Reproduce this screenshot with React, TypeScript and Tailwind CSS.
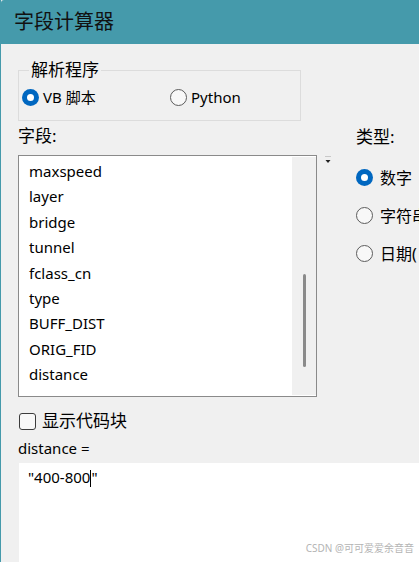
const fields = [
  "maxspeed",
  "layer",
  "bridge",
  "tunnel",
  "fclass_cn",
  "type",
  "BUFF_DIST",
  "ORIG_FID",
  "distance",
];

const Radio = ({ checked }: { checked?: boolean }) =>
  checked ? (
    <span className="size-[17px] shrink-0 rounded-full bg-[#0067c0] flex items-center justify-center">
      <span className="size-[7px] rounded-full bg-white" />
    </span>
  ) : (
    <span className="size-[17px] shrink-0 rounded-full border-[1.5px] border-[#5c5c5c] bg-[#f8f8f8]" />
  );

export default function App() {
  return (
    <div className="w-[419px] h-[562px] overflow-hidden bg-[#f0f0f0] border-l border-[#459aab] flex flex-col font-['Noto_Sans','Noto_Sans_CJK_SC',sans-serif] text-black">
      {/* title bar */}
      <div className="h-[44px] shrink-0 bg-[#459aab] rounded-tl-[3px] flex items-center pl-[13px] text-[20px] text-[#111]">
        字段计算器
      </div>

      <div className="relative flex-1 flex flex-col pl-[17px]">
        <div className="flex">
          {/* left column */}
          <div className="w-[299px] shrink-0 flex flex-col">
            <div className="relative mt-[26px] w-[283px] h-[51px] border border-[#dcdcdc]">
              <span className="absolute left-[10px] top-[-12px] px-[2px] bg-[#f0f0f0] text-[17px] leading-[22px]">
                解析程序
              </span>
              <div className="flex items-center mt-[16px] ml-[3px]">
                <div className="flex items-center gap-[4px] w-[148px]">
                  <Radio checked />
                  <span className="text-[15px] leading-[20px]">VB 脚本</span>
                </div>
                <div className="flex items-center gap-[4px]">
                  <Radio />
                  <span className="text-[15px] leading-[20px]">Python</span>
                </div>
              </div>
            </div>

            <div className="mt-[5px] text-[17px] leading-[20px]">字段:</div>

            <div className="mt-[9px] h-[242px] border border-[#8a8a8a] bg-white flex">
              <ul className="flex-1 pl-[10px] pt-[3px] text-[15px]">
                {fields.map((f) => (
                  <li key={f} className="h-[25.4px] leading-[25.4px]">
                    {f}
                  </li>
                ))}
              </ul>
              <div className="w-[24px] my-[1px] bg-[#f0f0f0] flex justify-center">
                <div className="mt-[117px] w-[3px] h-[93px] rounded-full bg-[#8a8a8a]" />
              </div>
            </div>
          </div>

          {/* tiny dropdown arrow */}
          <div className="ml-[8px] mt-[112px] shrink-0">
            <svg width="6" height="8" viewBox="0 0 6 8">
              <line x1="0" y1="0.5" x2="6" y2="0.5" stroke="#c8c8c8" />
              <path d="M0.5 4 H5.5 L3 7 Z" fill="#222" />
            </svg>
          </div>

          {/* type column */}
          <div className="ml-[25px] mt-[83px] shrink-0 flex flex-col whitespace-nowrap">
            <div className="text-[17px] leading-[20px]">类型:</div>
            <div className="mt-[22px] flex flex-col gap-[21px]">
              <div className="flex items-center gap-[7px] h-[17px]">
                <Radio checked />
                <span className="text-[16px]">数字</span>
              </div>
              <div className="flex items-center gap-[7px] h-[17px]">
                <Radio />
                <span className="text-[16px]">字符串</span>
              </div>
              <div className="flex items-center gap-[7px] h-[17px]">
                <Radio />
                <span className="text-[16px]">日期(</span>
              </div>
            </div>
          </div>
        </div>

        {/* code block checkbox */}
        <div className="mt-[14px] flex items-center gap-[6px] pl-[1px]">
          <span className="size-[17px] rounded-[3px] border-[1.5px] border-[#3c3c3c] bg-[#f8f8f8]" />
          <span className="text-[17px] leading-[20px]">显示代码块</span>
        </div>

        <div className="mt-[7px] text-[15px] leading-[20px]">distance =</div>

        <div className="mt-[5px] ml-[1px] flex-1 bg-white pl-[9px] pt-[4px] text-[15px] leading-[20px]">
          "400-800<span className="inline-block w-px h-[17px] bg-black align-middle" />"
        </div>

        <span className="absolute right-[5px] bottom-[6px] text-[10px] text-[#b4b4b4]">
          CSDN @可可爱爱余音音
        </span>
      </div>
    </div>
  );
}
